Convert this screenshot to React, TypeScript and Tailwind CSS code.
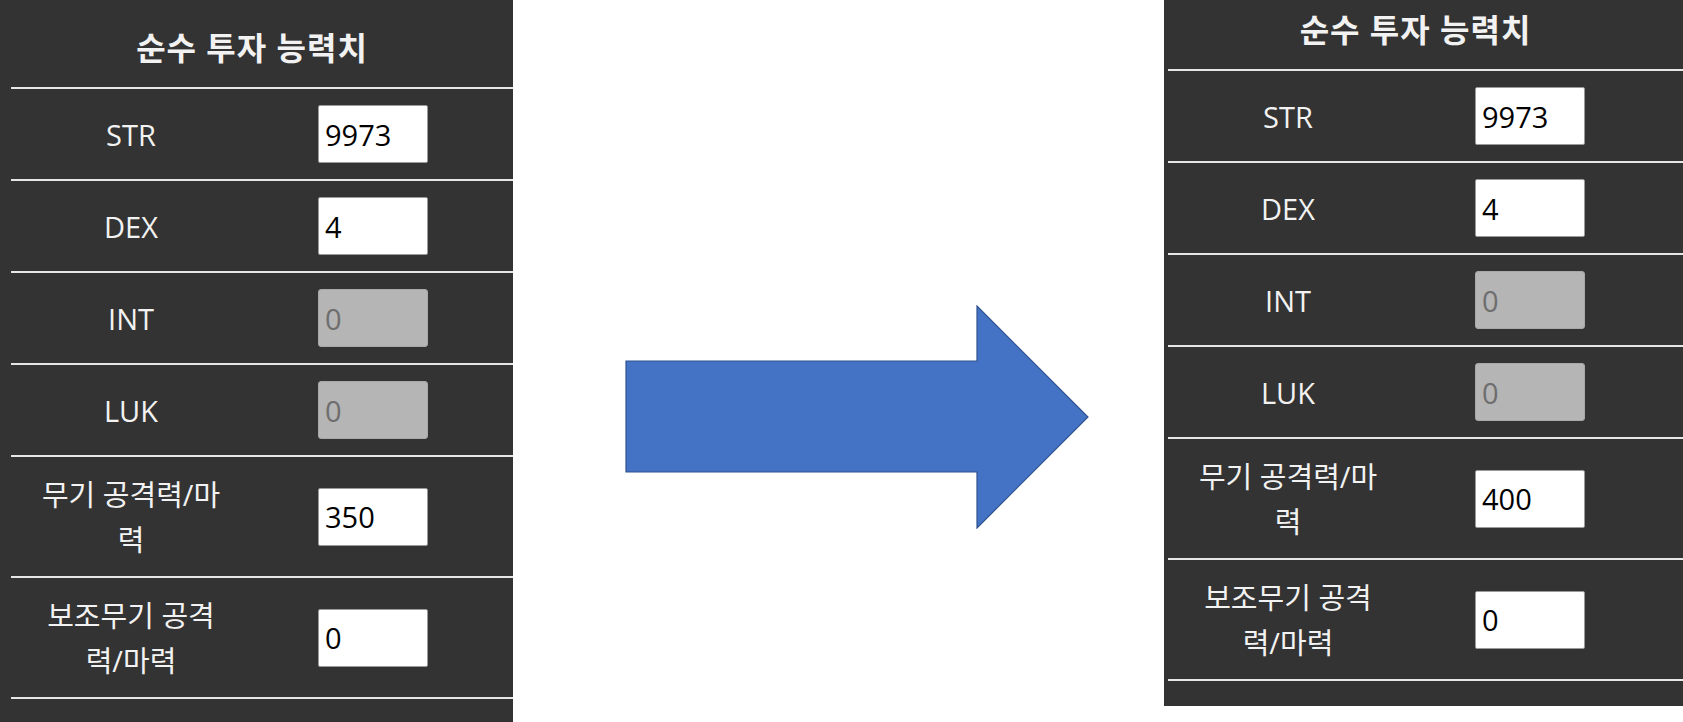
import React from "react";

type Stat = {
  label: string;
  value: string;
  disabled?: boolean;
  tall?: boolean;
};

const before: Stat[] = [
  { label: "STR", value: "9973" },
  { label: "DEX", value: "4" },
  { label: "INT", value: "0", disabled: true },
  { label: "LUK", value: "0", disabled: true },
  { label: "무기 공격력/마력", value: "350", tall: true },
  { label: "보조무기 공격력/마력", value: "0", tall: true },
];

const after: Stat[] = before.map((s) =>
  s.label === "무기 공격력/마력" ? { ...s, value: "400" } : s
);

function StatPanel({ stats, className }: { stats: Stat[]; className: string }) {
  return (
    <div className={`bg-[#333333] text-[#f2f2f2] overflow-hidden shrink-0 ${className}`}>
      {/* title */}
      <div className="h-[89px] pr-[20px] pt-[8px] flex items-center justify-center text-[32px] tracking-[1px] font-bold border-b-2 border-[#e6e6e6]">
        순수 투자 능력치
      </div>
      {stats.map((s) => (
        <div
          key={s.label}
          className={`flex items-center border-b-2 border-[#e6e6e6] ${s.tall ? "h-[121px]" : "h-[92px]"}`}
        >
          <div className="ml-[20px] w-[200px] text-center text-[29px] leading-[45px]">{s.label}</div>
          <input
            readOnly
            disabled={s.disabled}
            value={s.value}
            className={`ml-[87px] w-[110px] h-[58px] px-[6px] text-[29px] border rounded-[2px] outline-none ${
              s.disabled
                ? "bg-[#b5b5b5] border-[#a8a8a8] text-[#6e6e6e] rounded-[3px]"
                : "bg-white border-[#9a9a9a] text-black"
            }`}
          />
        </div>
      ))}
    </div>
  );
}

export default function App() {
  return (
    <div
      className="h-[722px] w-[1683px] bg-white flex items-start overflow-hidden"
      style={{ fontFamily: '"Open Sans", "Noto Sans CJK KR", sans-serif' }}
    >
      <StatPanel stats={before} className="w-[513px] h-[722px] pl-[11px]" />

      <svg className="ml-[112px] mt-[305px] shrink-0" width="464" height="224" viewBox="0 0 464 224">
        <polygon
          points="1,56 352,56 352,1 463,112 352,223 352,167 1,167"
          fill="#4472C4"
          stroke="#2F528F"
          strokeWidth="1.2"
        />
      </svg>

      <div className="ml-[75px] w-[519px] h-[706px] overflow-hidden shrink-0 bg-[#333333]">
        <StatPanel stats={after} className="w-[519px] -mt-[18px] pl-[4px]" />
      </div>
    </div>
  );
}
